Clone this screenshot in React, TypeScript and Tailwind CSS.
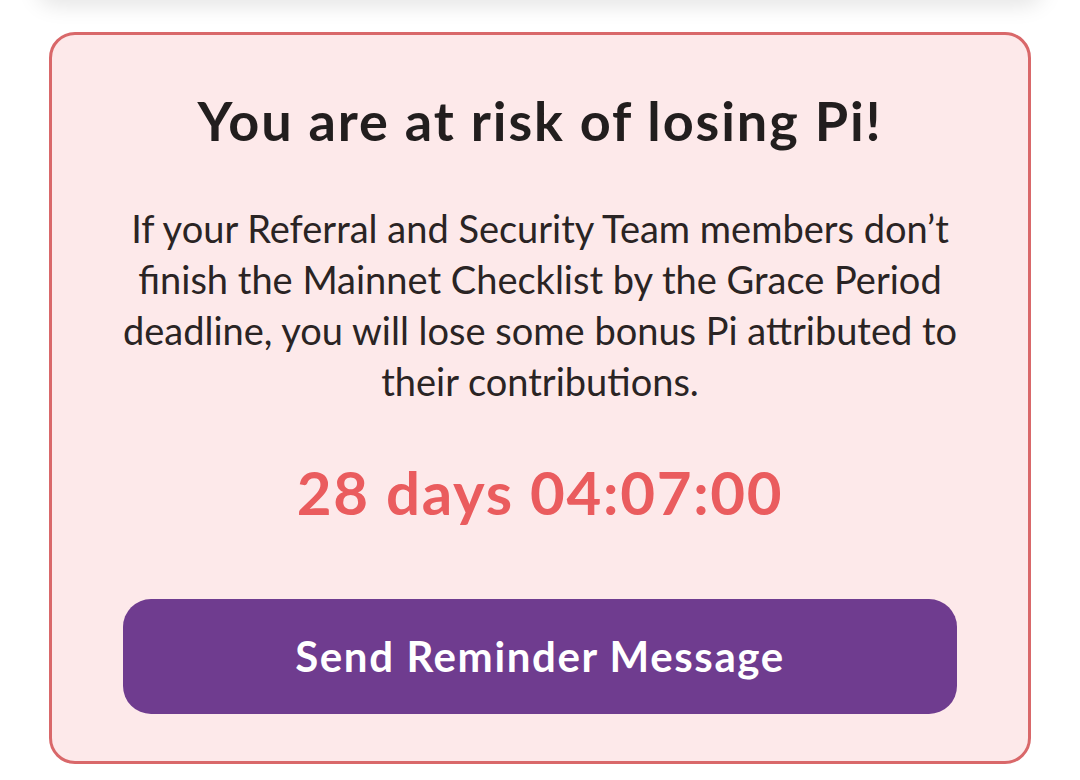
import React from "react";

export default function App() {
  return (
    <div className="min-h-[780px] w-[1080px] bg-white overflow-hidden" style={{ fontFamily: "Lato, 'Noto Sans', sans-serif" }}>
      <div className="mx-[36px] -mt-[20px] h-[20px] bg-white rounded-b-[24px] shadow-[0_4px_22px_rgba(0,0,0,0.13)]" />
      <div className="mx-[49px] mt-[32px] rounded-[26px] border-[3px] border-[#d9686a] bg-[#fde9ea] px-[71px] pt-[54px] pb-[47px] flex flex-col items-center">
        <h1 className="text-[54px] leading-[64px] tracking-[1.9px] font-bold text-[#221e1e] text-center whitespace-nowrap">You are at risk of losing Pi!</h1>
        <p className="mt-[50px] text-[38px] leading-[51px] text-[#2a2424] text-center whitespace-nowrap">
          If your Referral and Security Team members don’t<br />
          finish the Mainnet Checklist by the Grace Period<br />
          deadline, you will lose some bonus Pi attributed to<br />
          their contributions.
        </p>
        <div className="mt-[49px] text-[60px] leading-[72px] tracking-[1.7px] font-bold text-[#ea5c5e] text-center">28 days 04:07:00</div>
        <button className="mt-[71px] w-full h-[115px] rounded-[28px] bg-[#6f3c8f] text-white text-[42px] tracking-[1.6px] font-bold">Send Reminder Message</button>
      </div>
    </div>
  );
}
